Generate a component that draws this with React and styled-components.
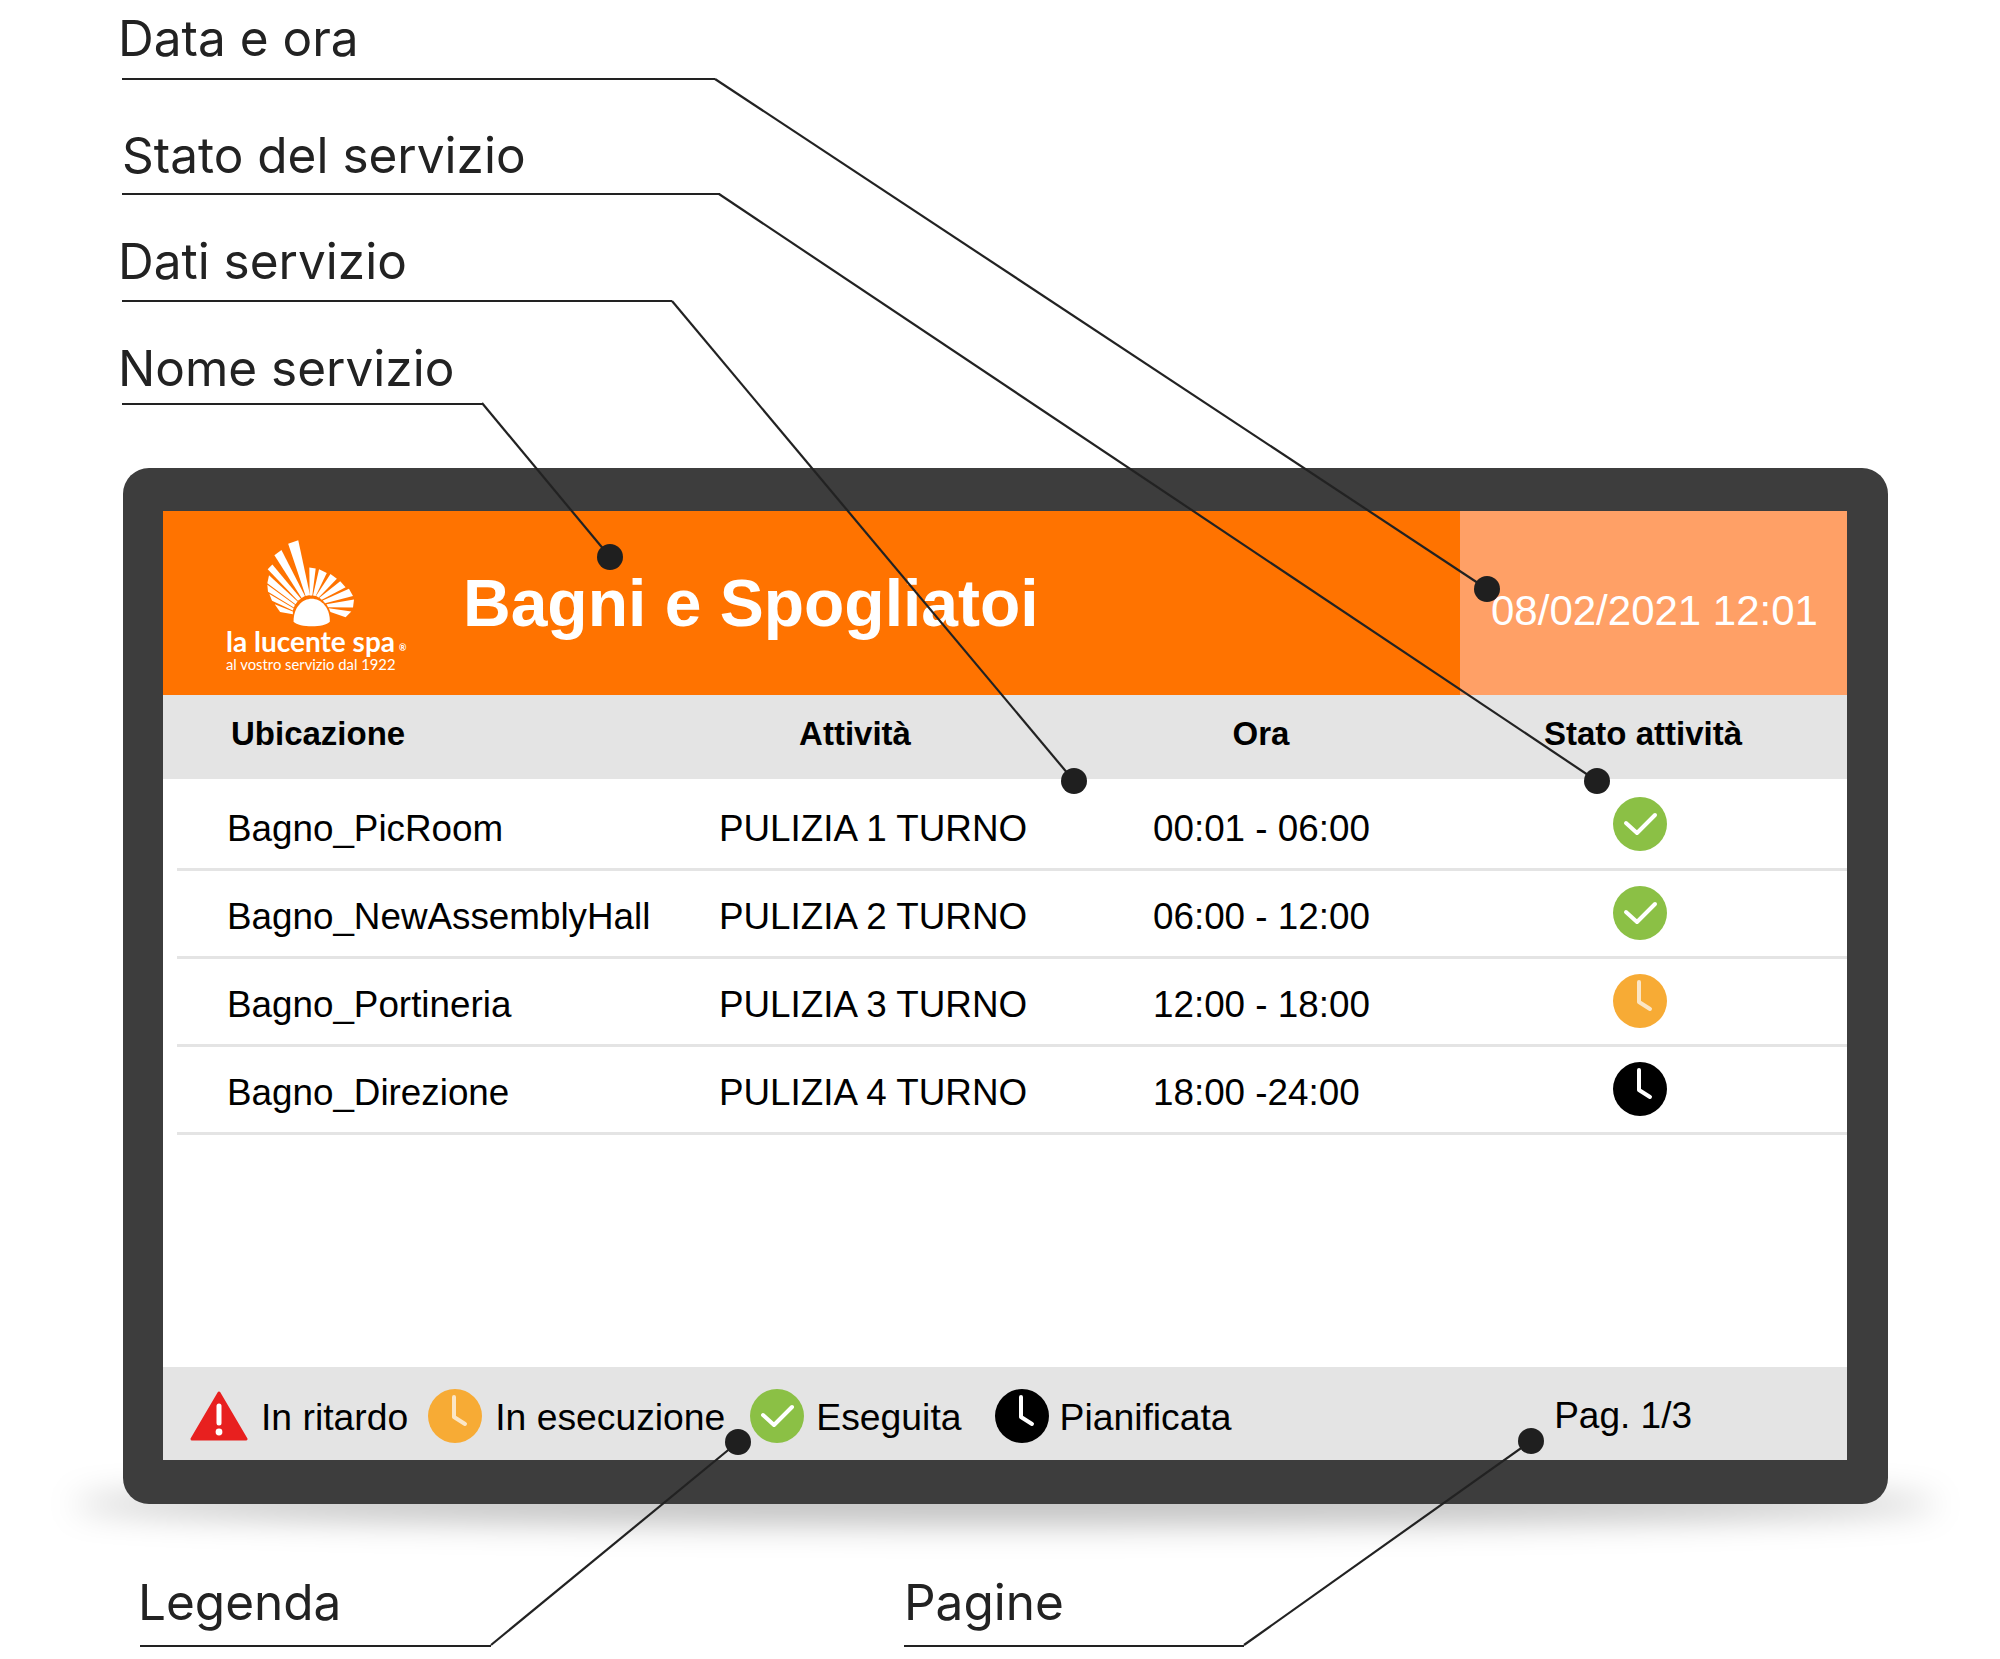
import styled, { createGlobalStyle } from "styled-components";

const GlobalStyle = createGlobalStyle`
  html, body { margin: 0; padding: 0; background: #fff; }
  body { font-family: "Liberation Sans", Arial, sans-serif; }
`;

const Page = styled.div`
  position: relative;
  isolation: isolate;
  width: 2000px;
  height: 1659px;
  overflow: hidden;
  background: #fff;
`;

const TopCallouts = styled.div`
  display: flex;
  flex-direction: column;
  margin-left: 122px;
`;

const BottomCallouts = styled.div`
  display: flex;
  align-items: flex-end;
  height: 143px;
`;

const Callout = styled.div`
  display: flex;
  align-items: flex-end;
  box-sizing: border-box;
  width: ${(p) => p.$width}px;
  height: ${(p) => p.$height}px;
  margin-left: ${(p) => p.$left || 0}px;
  border-bottom: 2px solid #222;
`;

const CalloutText = styled.span`
  font-family: "Inter", sans-serif;
  font-size: 49.5px;
  line-height: 56px;
  color: #222;
  padding-bottom: ${(p) => p.$lift}px;
  margin-left: ${(p) => p.$shift || 0}px;
  white-space: nowrap;
`;

const Device = styled.div`
  position: relative;
  box-sizing: border-box;
  display: flex;
  width: 1765px;
  height: 1036px;
  margin: 63px 0 0 123px;
  padding: 43px 41px 44px 40px;
  background: #3d3d3d;
  border-radius: 26px;

  &::after {
    content: "";
    position: absolute;
    z-index: -1;
    left: -50px;
    right: -50px;
    bottom: -20px;
    height: 40px;
    border-radius: 50%;
    background: rgba(0, 0, 0, 0.26);
    filter: blur(16px);
  }
`;

const Screen = styled.div`
  display: flex;
  flex-direction: column;
  flex: 1;
  background: #fff;
`;

const Banner = styled.header`
  display: flex;
  height: 184px;
`;

const BrandArea = styled.div`
  display: flex;
  align-items: center;
  flex: 1;
  padding-left: 63px;
  background: #ff7300;
`;

const Logo = styled.div`
  display: flex;
  flex-direction: column;
  width: 178px;
  padding-top: 4px;
  color: #fff;
`;

const Shell = styled.svg`
  display: block;
  width: 96px;
  height: 89px;
  margin-left: 37px;
`;

const LogoName = styled.div`
  display: flex;
  align-items: flex-end;
  font-family: "Lato", sans-serif;
  font-weight: 700;
  font-size: 28px;
  line-height: 28px;
  white-space: nowrap;
`;

const LogoMark = styled.span`
  font-size: 9px;
  line-height: 14px;
  margin-left: 4px;
`;

const LogoTag = styled.div`
  font-family: "Lato", sans-serif;
  font-size: 14.8px;
  line-height: 18px;
  white-space: nowrap;
`;

const Title = styled.h1`
  margin: 0 0 0 59px;
  font-size: 66px;
  font-weight: 700;
  color: #fff;
  white-space: nowrap;
`;

const DatePanel = styled.div`
  display: flex;
  align-items: center;
  box-sizing: border-box;
  width: 387px;
  padding: 15px 0 0 31px;
  background: #ffa066;
  color: #fff;
  font-size: 42px;
  white-space: nowrap;
`;

const HeadRow = styled.div`
  display: grid;
  grid-template-columns: 409px 430px 382px 382px;
  align-items: center;
  height: 84px;
  padding-left: 68px;
  padding-bottom: 6px;
  box-sizing: border-box;
  background: #e4e4e4;
`;

const HeadCell = styled.div`
  font-size: 33px;
  font-weight: 700;
  color: #000;
  text-align: ${(p) => (p.$center ? "center" : "left")};
`;

const Rows = styled.div`
  flex: 1;
`;

const Row = styled.div`
  display: grid;
  grid-template-columns: 492px 434px 300px 374px;
  align-items: center;
  box-sizing: border-box;
  height: ${(p) => (p.$first ? 92 : 88)}px;
  margin-left: 14px;
  padding-left: 50px;
  border-bottom: 3px solid #e4e4e4;
`;

const Cell = styled.div`
  font-size: 36.8px;
  color: #000;
  padding-top: ${(p) => (p.$first ? 10 : 6)}px;
  white-space: nowrap;
`;

const IconCell = styled.div`
  display: flex;
  justify-content: center;
  padding-bottom: ${(p) => (p.$first ? 0 : 2)}px;
`;

const StatusSvg = styled.svg`
  display: block;
  width: 54px;
  height: 54px;
  flex: none;
`;

const Footer = styled.footer`
  display: flex;
  align-items: center;
  box-sizing: border-box;
  height: 93px;
  padding: 4px 0 0 27px;
  background: #e4e4e4;
`;

const LegendItem = styled.div`
  display: flex;
  align-items: center;
  gap: ${(p) => p.$gap || 13}px;
  margin-right: ${(p) => p.$after || 0}px;
`;

const LegendLabel = styled.span`
  padding-top: 3px;
  font-size: 37.3px;
  color: #000;
  white-space: nowrap;
`;

const PageCount = styled.div`
  margin-left: auto;
  margin-right: 155px;
  font-size: 37px;
  color: #000;
`;

const Leaders = styled.svg`
  position: absolute;
  left: 0;
  top: 0;
  z-index: 2;
  pointer-events: none;
`;

const rows = [
  { place: "Bagno_PicRoom", task: "PULIZIA 1 TURNO", time: "00:01 - 06:00", status: "done" },
  { place: "Bagno_NewAssemblyHall", task: "PULIZIA 2 TURNO", time: "06:00 - 12:00", status: "done" },
  { place: "Bagno_Portineria", task: "PULIZIA 3 TURNO", time: "12:00 - 18:00", status: "running" },
  { place: "Bagno_Direzione", task: "PULIZIA 4 TURNO", time: "18:00 -24:00", status: "planned" },
];

// knee of each leader, then the dot it ends in
const leaders = [
  [715, 79, 1487, 589],
  [719, 194, 1597, 781],
  [672, 301, 1074, 781],
  [482, 403, 610, 557],
  [491, 1645, 738, 1442],
  [1244, 1645, 1531, 1441],
];

const shellRays = [
  "382,192 412,182 447,345 434,348",
  "341,226 362,211 432,348 422,354",
  "321,268 335,254 420,356 411,362",
  "320,310 325,286 410,364 404,372",
  "322,335 320,314 402,374 399,382",
  "334,362 326,342 398,384 396,391",
  "358,395 342,372 396,394 396,402",
  "445,263 464,266 454,346 446,346",
  "474,268 497,279 464,348 456,346",
  "508,282 527,296 473,352 465,348",
  "537,304 553,322 482,359 475,353",
  "563,326 575,348 492,369 485,361",
  "578,358 575,382 501,381 496,372",
  "570,394 553,411 508,395 503,384",
];

function StatusIcon({ status }) {
  if (status === "done") {
    return (
      <StatusSvg viewBox="0 0 54 54">
        <circle cx="27" cy="27" r="27" fill="#8bc045" />
        <path d="M13 26 L24 36 L42 18" fill="none" stroke="#fff" strokeWidth="4" strokeLinecap="round" strokeLinejoin="round" />
      </StatusSvg>
    );
  }
  const running = status === "running";
  return (
    <StatusSvg viewBox="0 0 54 54">
      <circle cx="27" cy="27" r="27" fill={running ? "#f7ab35" : "#000"} />
      <path d="M26 8 V28 L37 35" fill="none" stroke={running ? "#fbe6c6" : "#fff"} strokeWidth="4" strokeLinecap="round" strokeLinejoin="round" />
    </StatusSvg>
  );
}

function LateIcon() {
  return (
    <svg width="58" height="50" viewBox="0 0 58 50" style={{ display: "block" }}>
      <path d="M29 2 L56 48 H2 Z" fill="#e8201f" stroke="#e8201f" strokeWidth="3" strokeLinejoin="round" />
      <path d="M29 15 V32" stroke="#fff" strokeWidth="5" strokeLinecap="round" />
      <circle cx="29" cy="41" r="3.4" fill="#fff" />
    </svg>
  );
}

export default function App() {
  return (
    <Page>
      <GlobalStyle />

      <TopCallouts>
        <Callout $width={593} $height={80}>
          <CalloutText $shift={-4} $lift={12}>Data e ora</CalloutText>
        </Callout>
        <Callout $width={598} $height={115}>
          <CalloutText $lift={10}>Stato del servizio</CalloutText>
        </Callout>
        <Callout $width={550} $height={107}>
          <CalloutText $shift={-4} $lift={11}>Dati servizio</CalloutText>
        </Callout>
        <Callout $width={360} $height={103}>
          <CalloutText $shift={-4} $lift={7}>Nome servizio</CalloutText>
        </Callout>
      </TopCallouts>

      <Device>
        <Screen>
          <Banner>
            <BrandArea>
              <Logo>
                <Shell viewBox="310 175 280 265">
                  {shellRays.map((points) => (
                    <polygon key={points} points={points} fill="#fff" />
                  ))}
                  <path d="M398 424 C398 380 425 356 452 356 C480 356 507 382 506 424 C490 442 415 442 398 424 Z" fill="#fff" />
                </Shell>
                <LogoName>
                  la lucente spa<LogoMark>®</LogoMark>
                </LogoName>
                <LogoTag>al vostro servizio dal 1922</LogoTag>
              </Logo>
              <Title>Bagni e Spogliatoi</Title>
            </BrandArea>
            <DatePanel>08/02/2021 12:01</DatePanel>
          </Banner>

          <HeadRow>
            <HeadCell>Ubicazione</HeadCell>
            <HeadCell $center>Attività</HeadCell>
            <HeadCell $center>Ora</HeadCell>
            <HeadCell $center>Stato attività</HeadCell>
          </HeadRow>

          <Rows>
            {rows.map((row, i) => (
              <Row key={row.place} $first={i === 0}>
                <Cell $first={i === 0}>{row.place}</Cell>
                <Cell $first={i === 0}>{row.task}</Cell>
                <Cell $first={i === 0}>{row.time}</Cell>
                <IconCell $first={i === 0}>
                  <StatusIcon status={row.status} />
                </IconCell>
              </Row>
            ))}
          </Rows>

          <Footer>
            <LegendItem $after={20}>
              <LateIcon />
              <LegendLabel>In ritardo</LegendLabel>
            </LegendItem>
            <LegendItem $after={25}>
              <StatusIcon status="running" />
              <LegendLabel>In esecuzione</LegendLabel>
            </LegendItem>
            <LegendItem $after={33} $gap={12}>
              <StatusIcon status="done" />
              <LegendLabel>Eseguita</LegendLabel>
            </LegendItem>
            <LegendItem $gap={11}>
              <StatusIcon status="planned" />
              <LegendLabel>Pianificata</LegendLabel>
            </LegendItem>
            <PageCount>Pag. 1/3</PageCount>
          </Footer>
        </Screen>
      </Device>

      <BottomCallouts>
        <Callout $width={351} $height={80} $left={140}>
          <CalloutText $shift={-2} $lift={15}>Legenda</CalloutText>
        </Callout>
        <Callout $width={340} $height={80} $left={413}>
          <CalloutText $lift={15}>Pagine</CalloutText>
        </Callout>
      </BottomCallouts>

      <Leaders width="2000" height="1659" viewBox="0 0 2000 1659">
        {leaders.map(([x1, y1, x2, y2]) => (
          <g key={x1}>
            <line x1={x1} y1={y1} x2={x2} y2={y2} stroke="#222" strokeWidth="2.2" />
            <circle cx={x2} cy={y2} r="13" fill="#1f1f1f" />
          </g>
        ))}
      </Leaders>
    </Page>
  );
}
